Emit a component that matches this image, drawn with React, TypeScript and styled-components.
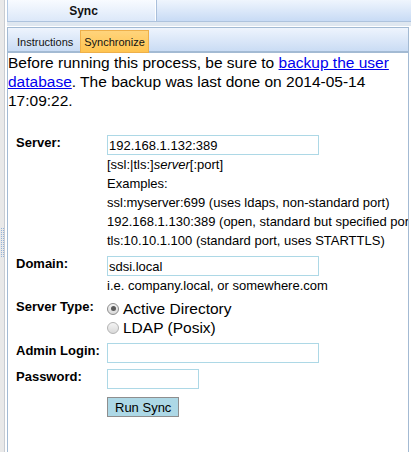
import React from "react";
import styled, { createGlobalStyle } from "styled-components";

const GlobalStyle = createGlobalStyle`
  html, body {
    margin: 0;
    padding: 0;
    background: #fff;
  }
  body {
    font-family: "Liberation Sans", Arial, sans-serif;
    color: #000;
  }
`;

const Frame = styled.div`
  display: flex;
  width: 411px;
  height: 452px;
  overflow: hidden;
`;

const Gutter = styled.div`
  flex: none;
  width: 4px;
  padding-top: 228px;
  background: #e9e9e9;
  border-right: 1px solid #c8ccd2;
`;

const Grip = styled.div`
  height: 30px;
  background: conic-gradient(#93b1d8 25%, transparent 0) 0 0 / 2px 2px;
`;

const Main = styled.div`
  flex: 1;
  min-width: 0;
  display: flex;
  flex-direction: column;
  padding-left: 2px;
`;

const TopBar = styled.div`
  display: flex;
  height: 21px;
  background: linear-gradient(#eff5fd, #c8dbf5);
  border-bottom: 1px solid #aec3dd;
`;

const TopTab = styled.div`
  display: flex;
  align-items: center;
  justify-content: center;
  width: 149px;
  padding-left: 4px;
  box-sizing: border-box;
  border-left: 1px solid #b4cae4;
  border-right: 1px solid #fff;
  box-shadow: 1px 0 0 #a9bfdb;
  background: linear-gradient(#f8fbff, #dce8f9);
  font: bold 12px "Liberation Sans", Arial, sans-serif;
  color: #111;
`;

const Band = styled.div`
  height: 4px;
  background: #dfe7f0;
  border-bottom: 1px solid #fff;
`;

const Panel = styled.div`
  flex: 1;
  min-height: 0;
  display: flex;
  flex-direction: column;
  margin-right: 2px;
  border: 1px solid #a3bad3;
  border-bottom: none;
`;

const SubBar = styled.div`
  display: flex;
  gap: 3px;
  height: 25px;
  box-sizing: border-box;
  padding: 2px 0 0 5px;
  background: linear-gradient(#eef4fd, #cadcf4);
  border-bottom: 2px solid #a3bad3;
`;

const SubTab = styled.div<{ $active?: boolean }>`
  display: flex;
  align-items: center;
  height: 23px;
  box-sizing: border-box;
  padding: 0 3px;
  border: 1px solid ${(p) => (p.$active ? "#eeb04a" : "transparent")};
  background: ${(p) =>
    p.$active ? "linear-gradient(#ffd47c, #ffc450)" : "transparent"};
  font: 11px "Liberation Sans", Arial, sans-serif;
  color: #111;
`;

const Content = styled.div`
  flex: 1;
  overflow: hidden;
  background: #fff;
`;

const Intro = styled.p`
  margin: 0;
  font-size: 15.5px;
  line-height: 19px;
`;

const Link = styled.a`
  color: #0000ee;
  text-decoration: underline;
`;

const Form = styled.div`
  display: flex;
  flex-direction: column;
  margin-top: 25px;
  padding-left: 8px;
`;

const FormRow = styled.div<{ $gap?: number }>`
  display: flex;
  align-items: flex-start;
  margin-top: ${(p) => p.$gap ?? 0}px;
`;

const Label = styled.div`
  flex: none;
  width: 91px;
  font: bold 13px/16px "Liberation Sans", Arial, sans-serif;
`;

const Field = styled.div`
  display: flex;
  flex-direction: column;
  align-items: flex-start;
  white-space: nowrap;
`;

const Input = styled.input<{ $width?: number }>`
  width: ${(p) => p.$width ?? 212}px;
  height: 20px;
  box-sizing: border-box;
  margin: 0;
  padding: 0 1px;
  border: 1px solid #add8e6;
  outline: none;
  background: #fff;
  font: 13px "Liberation Sans", Arial, sans-serif;
  color: #000;
`;

const Hint = styled.div`
  font: 13px/19px "Liberation Sans", Arial, sans-serif;
`;

const RadioLine = styled.label`
  display: flex;
  align-items: center;
  gap: 4px;
  height: 19px;
  font-size: 15.5px;
`;

const RadioDot = styled.span<{ $checked?: boolean }>`
  position: relative;
  flex: none;
  width: 12px;
  height: 12px;
  box-sizing: border-box;
  border-radius: 50%;
  border: 1px solid ${(p) => (p.$checked ? "#8d8d8d" : "#b3b3b3")};
  background: linear-gradient(#f4f4f4, #d9d9d9);

  &::after {
    content: "";
    display: ${(p) => (p.$checked ? "block" : "none")};
    position: absolute;
    left: 2.5px;
    top: 2.5px;
    width: 5px;
    height: 5px;
    border-radius: 50%;
    background: #5a5a5a;
  }
`;

const Button = styled.button`
  height: 20px;
  margin: 0 0 0 91px;
  padding: 0 7px;
  border: 1px solid #8e8e8e;
  border-radius: 0;
  background: #add8e6;
  font: 13px "Liberation Sans", Arial, sans-serif;
  color: #000;
`;

export default function App() {
  return (
    <>
      <GlobalStyle />
      <Frame>
        <Gutter>
          <Grip />
        </Gutter>
        <Main>
          <TopBar>
            <TopTab>Sync</TopTab>
          </TopBar>
          <Band />
          <Panel>
            <SubBar>
              <SubTab>Instructions</SubTab>
              <SubTab $active>Synchronize</SubTab>
            </SubBar>
            <Content>
              <Intro>
                Before running this process, be sure to{" "}
                <Link href="#">backup the user database</Link>. The backup was
                last done on 2014-05-14 17:09:22.
              </Intro>
              <Form>
                <FormRow>
                  <Label>Server:</Label>
                  <Field>
                    <Input defaultValue="192.168.1.132:389" />
                    <Hint>
                      [ssl:|tls:]<i>server</i>[:port]
                    </Hint>
                    <Hint>Examples:</Hint>
                    <Hint>ssl:myserver:699 (uses ldaps, non-standard port)</Hint>
                    <Hint>
                      192.168.1.130:389 (open, standard but specified port)
                    </Hint>
                    <Hint>tls:10.10.1.100 (standard port, uses STARTTLS)</Hint>
                  </Field>
                </FormRow>
                <FormRow $gap={6}>
                  <Label>Domain:</Label>
                  <Field>
                    <Input defaultValue="sdsi.local" />
                    <Hint>i.e. company.local, or somewhere.com</Hint>
                  </Field>
                </FormRow>
                <FormRow $gap={4}>
                  <Label>Server Type:</Label>
                  <Field>
                    <RadioLine>
                      <RadioDot $checked />
                      Active Directory
                    </RadioLine>
                    <RadioLine>
                      <RadioDot />
                      LDAP (Posix)
                    </RadioLine>
                  </Field>
                </FormRow>
                <FormRow $gap={6}>
                  <Label>Admin Login:</Label>
                  <Field>
                    <Input />
                  </Field>
                </FormRow>
                <FormRow $gap={6}>
                  <Label>Password:</Label>
                  <Field>
                    <Input type="password" $width={92} />
                  </Field>
                </FormRow>
                <FormRow $gap={8}>
                  <Button>Run Sync</Button>
                </FormRow>
              </Form>
            </Content>
          </Panel>
        </Main>
      </Frame>
    </>
  );
}
